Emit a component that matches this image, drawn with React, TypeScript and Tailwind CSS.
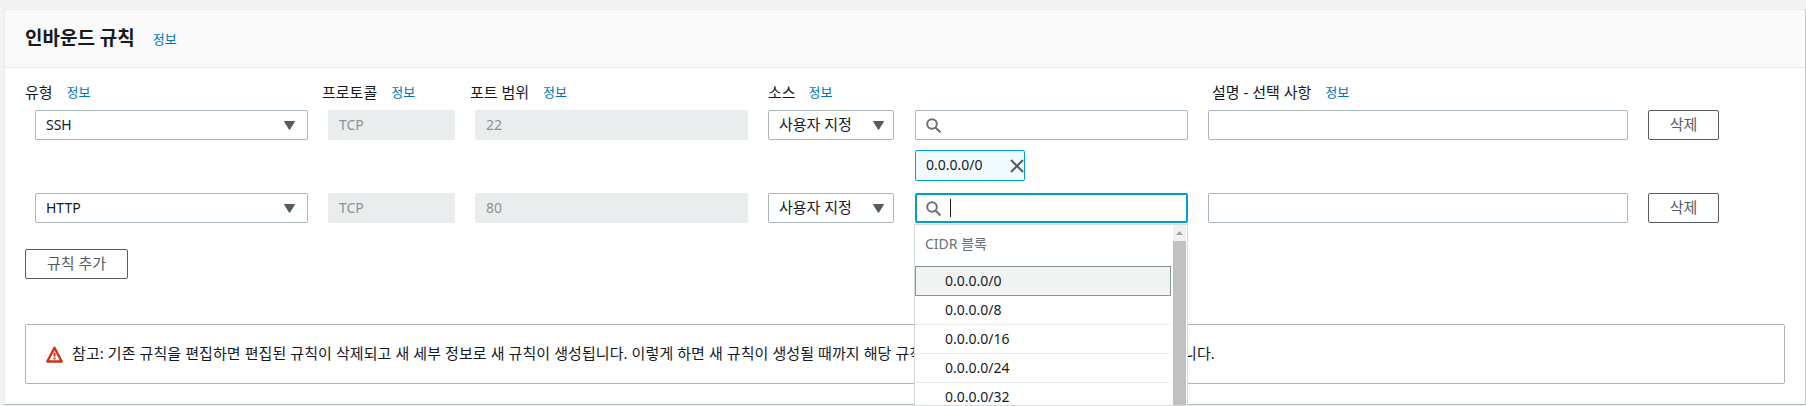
const font = "font-['Noto_Sans','Noto_Sans_CJK_KR',sans-serif]";

function Info() {
  return <span className="text-[13px] leading-[20px] text-[#0073bb]">정보</span>;
}

function Label({ text, gap, pad }: { text: string; gap: string; pad?: string }) {
  return (
    <div className={`flex items-center h-[20px] ${gap} ${pad ?? ""}`}>
      <span className="text-[15px] leading-[20px] text-[#16191f]">{text}</span>
      <Info />
    </div>
  );
}

function Arrow() {
  return (
    <svg width="11" height="9" viewBox="0 0 11 9" className="shrink-0">
      <path d="M0.5 0.5h10L5.5 8.5z" fill="#545b64" stroke="#545b64" strokeLinejoin="round" />
    </svg>
  );
}

function SearchIcon() {
  return (
    <svg width="15" height="15" viewBox="0 0 15 15" fill="none" stroke="#687078" strokeWidth="2" className="shrink-0">
      <circle cx="6" cy="6" r="4.8" />
      <path d="M9.5 9.5l5 5" />
    </svg>
  );
}

function Select({ text, cls, pad }: { text: string; cls: string; pad: string }) {
  return (
    <div className={`h-[30px] flex items-center justify-between bg-white border border-[#aab7b8] rounded-[2px] text-[#16191f] ${cls} ${pad}`}>
      <span className="pb-[2px]">{text}</span>
      <Arrow />
    </div>
  );
}

function Disabled({ text, cls }: { text: string; cls: string }) {
  return (
    <div className={`h-[30px] flex items-center px-[11px] pb-[2px] bg-[#eaeded] rounded-[2px] text-[14px] text-[#879596] ${cls}`}>{text}</div>
  );
}

function Button({ text, cls }: { text: string; cls: string }) {
  return (
    <div className={`h-[30px] flex items-center justify-center pb-[2px] bg-white border border-[#545b64] rounded-[2px] text-[15px] text-[#545b64] ${cls}`}>{text}</div>
  );
}

function Option({ text, cls }: { text: string; cls: string }) {
  return (
    <div className={`shrink-0 flex items-center pl-[30px] pb-[2px] text-[14px] text-[#16191f] ${cls}`}>{text}</div>
  );
}

export default function App() {
  return (
    <div className={`h-[406px] overflow-hidden bg-[#f2f3f3] pt-[9px] pl-[4px] ${font}`}>
      <div className="h-[396px] bg-white border border-[#eaeded] border-r-[#c8cccc] border-b-[#aab7b8]">
        <div className="h-[58px] bg-[#fafafa] border-b border-[#eaeded] pl-[20px] flex items-center gap-[18px]">
          <span className="text-[19px] font-bold text-[#16191f] leading-[24px] mb-[2px]">인바운드 규칙</span>
          <Info />
        </div>
        <div className="pl-[20px] pr-[20px] pt-[14px]">
          <div className="grid grid-cols-[297px_148px_298px_147px_293px_440px_71px]">
            <Label text="유형" gap="gap-[14px]" />
            <Label text="프로토콜" gap="gap-[14px]" />
            <Label text="포트 범위" gap="gap-[14px]" />
            <Label text="소스" gap="gap-[13px]" />
            <div />
            <Label text="설명 - 선택 사항" gap="gap-[14px]" pad="pl-[4px]" />
            <div />

            <div className="col-span-7 h-[8px]" />

            <Select text="SSH" cls="ml-[10px] w-[273px] text-[14px]" pad="pl-[10px] pr-[12px]" />
            <Disabled text="TCP" cls="ml-[6px] w-[127px]" />
            <Disabled text="22" cls="ml-[5px] w-[273px]" />
            <Select text="사용자 지정" cls="w-[126px] text-[15px]" pad="pl-[10px] pr-[9px]" />
            <div className="w-[273px] h-[30px] flex items-center pl-[10px] bg-white border border-[#aab7b8] rounded-[2px]">
              <SearchIcon />
            </div>
            <div className="w-[420px] h-[30px] bg-white border border-[#aab7b8] rounded-[2px]" />
            <Button text="삭제" cls="w-[71px]" />

            <div className="col-span-7 h-[10px]" />

            <div className="col-start-5 col-span-1 w-[110px] h-[31px] flex items-center justify-between pl-[10px] bg-[#f1faff] border border-[#00a1c9] rounded-[2px] text-[14px] text-[#16191f]">
              <span className="pb-[2px]">0.0.0.0/0</span>
              <svg width="14" height="14" viewBox="0 0 14 14" fill="none" stroke="#545b64" strokeWidth="2" className="shrink-0">
                <path d="M1 1l12 12M13 1L1 13" />
              </svg>
            </div>

            <div className="col-span-7 h-[12px]" />

            <Select text="HTTP" cls="ml-[10px] w-[273px] text-[14px]" pad="pl-[10px] pr-[12px]" />
            <Disabled text="TCP" cls="ml-[6px] w-[127px]" />
            <Disabled text="80" cls="ml-[5px] w-[273px]" />
            <Select text="사용자 지정" cls="w-[126px] text-[15px]" pad="pl-[10px] pr-[9px]" />
            <div className="relative w-[273px]">
              <div className="h-[30px] flex items-center gap-[9px] pl-[9px] bg-white border-2 border-[#00a1c9] rounded-[2px]">
                <SearchIcon />
                <div className="w-px h-[18px] bg-[#16191f]" />
              </div>
              <div className="absolute z-10 left-[-1px] top-[31px] w-[274px] h-[182px] flex bg-white border border-[#d5dbdb] overflow-hidden">
                <div className="flex-1 flex flex-col min-w-0 mr-[2px]">
                  <div className="h-[41px] shrink-0 flex items-center pl-[10px] pb-[4px] text-[14px] text-[#687078]">CIDR 블록</div>
                  <div className="h-[30px] shrink-0 flex items-center pl-[29px] pb-[2px] bg-[#f2f3f3] border border-[#879596] text-[14px] text-[#16191f]">0.0.0.0/0</div>
                  <Option text="0.0.0.0/8" cls="h-[28px]" />
                  <Option text="0.0.0.0/16" cls="h-[29px] border-t border-[#eaeded]" />
                  <Option text="0.0.0.0/24" cls="h-[29px] border-t border-[#eaeded]" />
                  <Option text="0.0.0.0/32" cls="h-[29px] border-t border-[#eaeded]" />
                </div>
                <div className="w-[13px] mr-px shrink-0 flex flex-col bg-[#f1f1f1]">
                  <div className="h-[16px] flex items-center justify-center">
                    <svg width="7" height="4" viewBox="0 0 7 4"><path d="M3.5 0L7 4H0z" fill="#a3a3a3" /></svg>
                  </div>
                  <div className="flex-1 bg-[#c1c1c1]" />
                </div>
              </div>
            </div>
            <div className="w-[420px] h-[30px] bg-white border border-[#aab7b8] rounded-[2px]" />
            <Button text="삭제" cls="w-[71px]" />
          </div>

          <Button text="규칙 추가" cls="mt-[26px] w-[103px]" />

          <div className="mt-[45px] h-[60px] flex items-center gap-[9px] pl-[20px] border border-[#aab7b8] rounded-[2px] text-[15px] tracking-[0.08px] text-[#16191f] whitespace-nowrap">
            <svg width="17" height="17" viewBox="0 0 17 17" fill="none" className="shrink-0">
              <path d="M8.5 1.8L1.3 15.5h14.4z" stroke="#d13212" strokeWidth="2.4" strokeLinejoin="round" />
              <path d="M8.5 6.5v4M8.5 11.5v2" stroke="#d13212" strokeWidth="2" />
            </svg>
            <span className="pb-[2px]">참고: 기존 규칙을 편집하면 편집된 규칙이 삭제되고 새 세부 정보로 새 규칙이 생성됩니다. 이렇게 하면 새 규칙이 생성될 때까지 해당 규칙에 의존하는 트래픽이 잠시 삭제될 수 있습니다.</span>
          </div>
        </div>
      </div>
    </div>
  );
}
